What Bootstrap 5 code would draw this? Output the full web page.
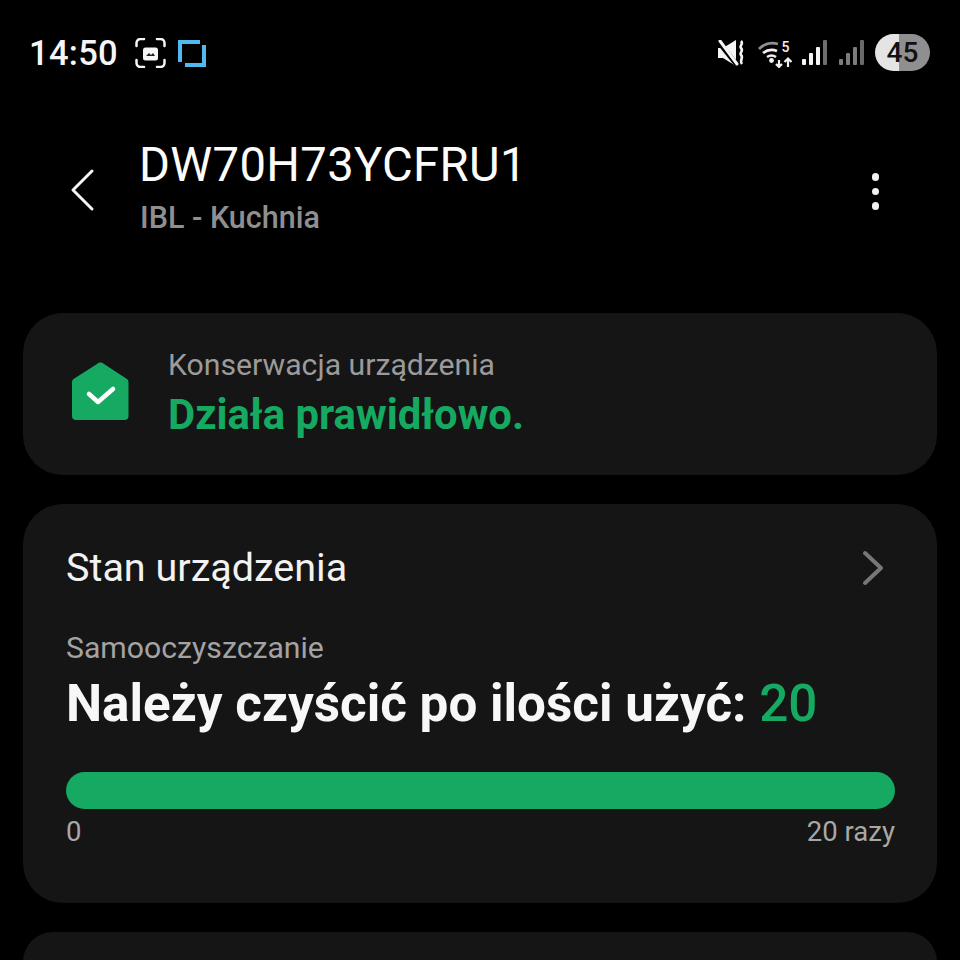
<!DOCTYPE html>
<html lang="pl">
<head>
<meta charset="utf-8">
<title>DW70H73YCFRU1</title>
<link href="https://cdn.jsdelivr.net/npm/bootstrap@5.3.0/dist/css/bootstrap.min.css" rel="stylesheet">
<style>
html,body{background:#000;height:960px;overflow:hidden}
body{font-family:Roboto,"Liberation Sans",sans-serif;color:#fafafa}
.screen{width:960px;height:960px;overflow:hidden}
.statusrow{height:106px;padding:33px 30px 0 30px;align-items:flex-start}
.clock{font-size:34.5px;font-weight:500;line-height:40px;letter-spacing:.3px;color:#f5f5f5;width:88px;margin-left:-1px}
.icshot{margin:5px 0 0 18px}
.icblue{margin:7px 0 0 12px}
.righticons{height:38px}
.icmute{margin:7px 13px 0 0}
.icwifi{margin:4px 9px 0 0}
.icsig1{margin:7px 12px 0 0}
.icsig2{margin:7px 11px 0 0}
.batt{width:55px;height:37px;margin-top:1px;border-radius:19px;background:linear-gradient(90deg,#e4e4e4 0 44%,#8f8f8f 44% 100%);color:#111;font-size:28px;font-weight:500;line-height:37px;text-align:center}
.headrow{height:207px;padding:0 0 0 70px}
.backcol{width:69px;padding-top:62px}
.devtitle{font-size:47.200px;line-height:56px;font-weight:400;letter-spacing:.35px;margin-top:31px;color:#fcfcfc}
.devsub{font-size:30.500px;line-height:36px;font-weight:500;color:#8f8f91;margin:7px 0 0 1px}
.menudots{width:10px;margin:0 80px 0 0;padding-top:67px}
.menudots i{display:block;width:7.500px;height:7.500px;border-radius:50%;background:#f2f2f2;margin:0 0 7px 1.500px}
.panel{background:#151515;border-radius:40px;margin:0 23px 29px 23px}
.statepanel{height:162px;padding:34px 0 0 49px}
.statelabel{font-size:30.200px;line-height:36px;color:#9b9b9b}
.stateok{font-size:41.800px;line-height:48px;font-weight:700;color:#15a961;margin-top:8px}
.statetext{margin-left:39px}
.devpanel{height:399px;padding:42px 42px 0 43px}
.devhead{font-size:39.500px;line-height:44px;color:#f2f2f2}
.devchev{margin-right:11px}
.sublabel{font-size:30.200px;line-height:36px;color:#a3a3a3;margin-top:40px}
.bigline{font-size:51.200px;line-height:60px;font-weight:700;color:#f7f7f7;margin-top:8px}
.bigline span{color:#15a961;font-weight:500}
.meter{height:37px;border-radius:19px;background:#15a961;margin-top:38px}
.scale{font-size:27.500px;line-height:32px;color:#a8a8a8;margin-top:7px}
.lastpanel{height:60px;margin-bottom:0}
</style>
</head>
<body>
<div class="screen">
  <div class="statusrow d-flex">
    <div class="clock">14:50</div>
    <svg class="icshot" width="31" height="30" viewBox="0 0 31 30" fill="none"><path d="M1.500 8V5a4 4 0 0 1 4-4H9M22 1h3.500a4 4 0 0 1 4 4v3M29.500 22v3a4 4 0 0 1-4 4H22M9 29H5.500a4 4 0 0 1-4-4v-3" stroke="#f5f5f5" stroke-width="2.500" stroke-linecap="round"/><rect x="8" y="9.500" width="15" height="13" rx="2.500" fill="#f5f5f5"/><path d="M11 18l3-3 2 2 2-2 2 3z" fill="#222"/></svg>
    <svg class="icblue" width="28" height="27" viewBox="0 0 28 27" fill="none"><path d="M2 22V2h20" stroke="#4fb9f2" stroke-width="4"/><path d="M26 5v20H7" stroke="#4fb9f2" stroke-width="4"/></svg>
    <div class="righticons ms-auto d-flex align-items-start">
      <svg class="icmute" width="27" height="26" viewBox="0 0 27 26" fill="none"><path d="M0 8h5L18 0v26L5 18H0z" fill="#f5f5f5"/><path d="M-1 0l20 25" stroke="#000" stroke-width="5"/><path d="M2 1l17 23" stroke="#f5f5f5" stroke-width="3" stroke-linecap="round"/><path d="M23 1c3 3-2 5 0 7 3 3-2 5 0 7 3 3-2 5 1 9" stroke="#f5f5f5" stroke-width="2.600"/></svg>
      <svg class="icwifi" width="35" height="31" viewBox="0 -4 35 31" fill="none"><path d="M1 8c5-5 12-7 19-5" stroke="#8f8f8f" stroke-width="2.800"/><path d="M5 12c4-3 9-4 14-2M9 16c3-2 6-2 9 0" stroke="#f0f0f0" stroke-width="2.600"/><circle cx="13.500" cy="19.500" r="2.400" fill="#f5f5f5"/><path d="M21 26v-7M18 23l3 3 3-3M30 26v-7M26.500 21l3.500-3.500 3.500 3.500" stroke="#f0f0f0" stroke-width="2.200"/><text x="23.500" y="11" font-family="Roboto" font-size="14" font-weight="500" fill="#f0f0f0">5</text></svg>
      <svg class="icsig1" width="25" height="26" viewBox="0 0 25 26"><rect x="0" y="19" width="4" height="6" rx="1" fill="#f5f5f5"/><rect x="7" y="13" width="4" height="12" rx="1" fill="#f5f5f5"/><rect x="14" y="7" width="4" height="18" rx="1" fill="#f5f5f5"/><rect x="21" y="0" width="4" height="25" rx="1" fill="#6e6e6e"/></svg>
      <svg class="icsig2" width="25" height="26" viewBox="0 0 25 26"><rect x="0" y="19" width="4" height="6" rx="1" fill="#7c7c7c"/><rect x="7" y="13" width="4" height="12" rx="1" fill="#7c7c7c"/><rect x="14" y="7" width="4" height="18" rx="1" fill="#7c7c7c"/><rect x="21" y="0" width="4" height="25" rx="1" fill="#6a6a6a"/></svg>
      <div class="batt">45</div>
    </div>
  </div>
  <div class="headrow d-flex">
    <div class="backcol">
      <svg width="26" height="46" viewBox="0 0 26 46" fill="none"><path d="M22 3L3 22l19 19" stroke="#f5f5f5" stroke-width="3" stroke-linecap="round" stroke-linejoin="round"/></svg>
    </div>
    <div class="flex-grow-1">
      <div class="devtitle">DW70H73YCFRU1</div>
      <div class="devsub">IBL - Kuchnia</div>
    </div>
    <div class="menudots"><i></i><i></i><i></i></div>
  </div>
  <div class="panel statepanel d-flex">
    <svg width="57" height="60" viewBox="0 0 57 60" style="margin-top:15px"><path d="M25 2a5 5 0 0 1 7 0l23 15a4 4 0 0 1 1.500 3V54a4 4 0 0 1-4 4H4a4 4 0 0 1-4-4V20a4 4 0 0 1 1.500-3z" fill="#15a961"/><path d="M17 32l9 8 15-13" stroke="#fff" stroke-width="4.500" fill="none" stroke-linecap="round" stroke-linejoin="round"/></svg>
    <div class="statetext">
      <div class="statelabel">Konserwacja urządzenia</div>
      <div class="stateok">Działa prawidłowo.</div>
    </div>
  </div>
  <div class="panel devpanel">
    <div class="d-flex justify-content-between align-items-center">
      <div class="devhead">Stan urządzenia</div>
      <svg class="devchev" width="22" height="36" viewBox="0 0 22 36" fill="none"><path d="M3 3l16 15L3 33" stroke="#777" stroke-width="4" stroke-linecap="round" stroke-linejoin="round"/></svg>
    </div>
    <div class="sublabel">Samooczyszczanie</div>
    <div class="bigline">Należy czyścić po ilości użyć: <span>20</span></div>
    <div class="meter"></div>
    <div class="scale d-flex justify-content-between"><span>0</span><span>20 razy</span></div>
  </div>
  <div class="panel lastpanel"></div>
</div>
<script src="https://cdn.jsdelivr.net/npm/bootstrap@5.3.0/dist/js/bootstrap.bundle.min.js"></script>
</body>
</html>
